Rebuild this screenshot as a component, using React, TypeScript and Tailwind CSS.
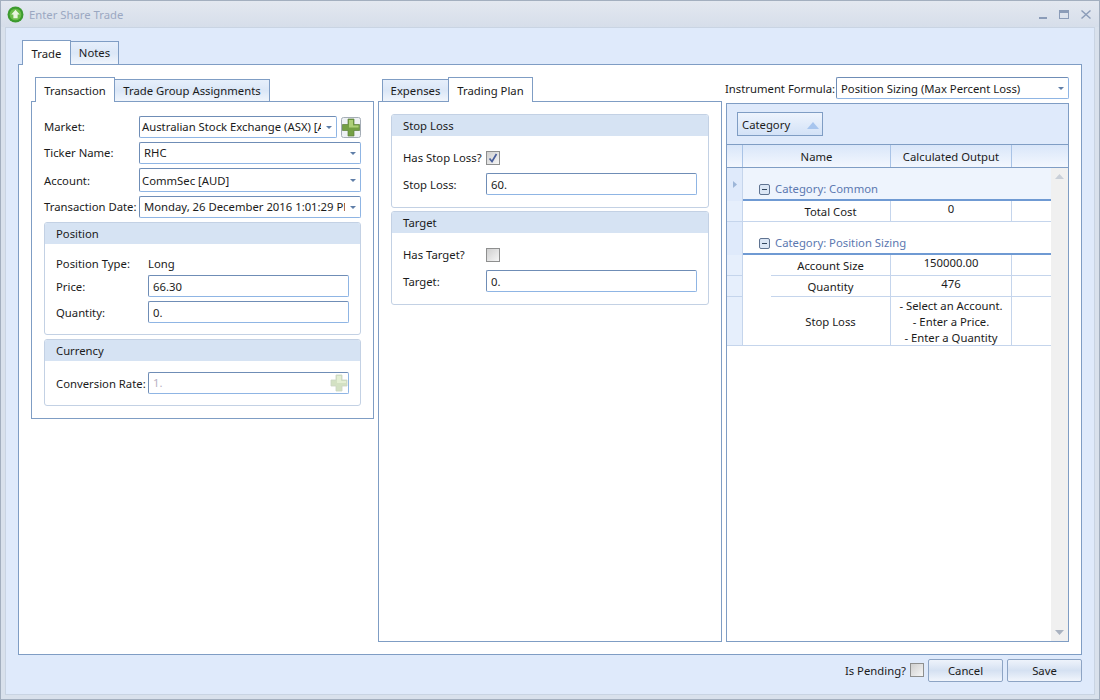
import React from 'react';

const inputBorder =
  'border border-[#6f8db6] border-r-[#8fb5e4] border-b-[#8fb5e4] rounded-[2px] bg-white';

function Arrow({ color = '#5f7ea8' }: { color?: string }) {
  return (
    <svg width="6" height="3" viewBox="0 0 6 3" className="shrink-0">
      <path d="M0 0h6L3 3z" fill={color} />
    </svg>
  );
}

function Combo({
  value,
  className,
  textClass,
}: {
  value: string;
  className: string;
  textClass: string;
}) {
  return (
    <div className={`flex min-w-0 items-center ${inputBorder} ${className}`}>
      <span className={`min-w-0 flex-1 overflow-hidden whitespace-nowrap ${textClass}`}>
        {value}
      </span>
      <span className="flex w-[15px] shrink-0 justify-center">
        <Arrow />
      </span>
    </div>
  );
}

function PlusIcon({ faded }: { faded?: boolean }) {
  return (
    <svg width="18" height="18" viewBox="0 0 18 18" className={faded ? 'opacity-30' : ''}>
      <path
        d="M6 1h6v5h5v6h-5v5H6v-5H1V6h5z"
        fill="#6f9e3c"
        stroke="#55793a"
        strokeWidth="0.8"
      />
      <path d="M7 2h4v5h5v2H7z" fill="#a9cc72" />
    </svg>
  );
}

function AddButton() {
  return (
    <svg width="20" height="21" viewBox="0 0 20 21" className="ml-[4px] shrink-0">
      <rect x="0.5" y="0.5" width="19" height="20" rx="2" fill="#eef1f4" stroke="#a4adb6" />
      <path d="M7 2h6v5.5h5.5v6H13V19H7v-5.5H1.5v-6H7z" fill="#74a044" stroke="#5c8039" strokeWidth="0.7" />
      <path d="M8 3h4v5.5h5.5v2H8z" fill="#adcf78" />
    </svg>
  );
}

function Group({
  title,
  className,
  children,
}: {
  title: string;
  className: string;
  children: React.ReactNode;
}) {
  return (
    <div className={`rounded-[3px] border border-[#c3d1e4] bg-white ${className}`}>
      <div className="flex h-[21px] items-center rounded-t-[2px] bg-[#d6e3f3] pl-[11px] pt-px">{title}</div>
      {children}
    </div>
  );
}

function Check({ checked }: { checked?: boolean }) {
  return (
    <div className="flex h-[14px] w-[14px] items-center justify-center border border-[#8e8f8f] bg-gradient-to-br from-[#cfcfcf] to-[#f6f6f6]">
      {checked && (
        <svg width="10" height="10" viewBox="0 0 10 10">
          <path d="M1.5 5.5 4 8.5 8.5 1" fill="none" stroke="#4a5f9c" strokeWidth="1.7" />
        </svg>
      )}
    </div>
  );
}

function Tab({
  label,
  active,
  className,
}: {
  label: string;
  active?: boolean;
  className: string;
}) {
  return (
    <div
      className={`flex items-center justify-center border border-b-0 border-[#7f9dc4] ${
        active
          ? 'z-10 -mb-px bg-white pt-[2px]'
          : 'bg-gradient-to-b from-[#e6effb] via-[#dbe7f7] to-[#f0f5fc] pt-px'
      } ${className}`}
    >
      {label}
    </div>
  );
}

function Field({ label, value, labelClass }: { label: string; value: string; labelClass: string }) {
  return (
    <div className="flex items-center">
      <span className={`pt-[2px] ${labelClass}`}>{label}</span>
      <div className={`flex h-[22px] flex-1 items-center pl-[4px] pt-[2px] ${inputBorder}`}>{value}</div>
    </div>
  );
}

const rows = [
  { name: 'Account Size', value: ['150000.00'], h: 'h-[21px]', last: false },
  { name: 'Quantity', value: ['476'], h: 'h-[21px]', last: false },
  {
    name: 'Stop Loss',
    value: ['- Select an Account.', '- Enter a Price.', '- Enter a Quantity'],
    h: 'h-[49px]',
    last: true,
  },
];

function GridRow({
  name,
  value,
  h,
  last,
}: {
  name: string;
  value: string[];
  h: string;
  last: boolean;
}) {
  const line = 'border-b border-[#c5d5ec]';
  return (
    <div className={`flex ${h}`}>
      <div className={`w-[16px] shrink-0 border-r border-[#c5d5ec] bg-[#e6effc] ${line}`} />
      <div className={`w-[28px] shrink-0 ${last ? line : ''}`} />
      <div className={`flex w-[120px] shrink-0 items-center justify-center border-r border-[#c5d5ec] pt-[2px] ${line}`}>
        {name}
      </div>
      <div
        className={`flex w-[121px] shrink-0 flex-col items-center justify-start border-r border-[#c5d5ec] leading-[16px] ${
          value.length > 1 ? 'pt-px' : ''
        } ${line}`}
      >
        {value.map((v) => (
          <span key={v}>{v}</span>
        ))}
      </div>
      <div className={`flex-1 ${line}`} />
    </div>
  );
}

function GroupRow({ title, current }: { title: string; current?: boolean }) {
  return (
    <div className="flex h-[33px]">
      <div className="flex w-[16px] shrink-0 items-center justify-center border-r border-[#c5d5ec] bg-[#dfeafb]">
        {current && (
          <svg width="4" height="7" viewBox="0 0 4 7">
            <path d="M0 0l4 3.5L0 7z" fill="#9db6d8" />
          </svg>
        )}
      </div>
      <div
        className={`flex flex-1 items-end gap-[5px] border-b-2 border-[#6f9ad3] pb-[1px] pl-[16px] text-[#5b78b0] ${
          current ? 'bg-[#eef4fd]' : 'bg-white'
        }`}
      >
        <div className="mb-[3px] flex h-[11px] w-[11px] items-center justify-center rounded-[2px] border border-[#5f7391] bg-[#dbe6f5]">
          <div className="h-px w-[5px] bg-[#33475f]" />
        </div>
        {title}
      </div>
    </div>
  );
}

export default function App() {
  return (
    <div
      className="flex h-[700px] w-[1100px] flex-col overflow-hidden border border-[#a3afbf] bg-[#d9e1ec] text-[11.3px] text-[#1b1b1b]"
      style={{ fontFamily: '"Noto Sans", sans-serif' }}
    >
      {/* title bar */}
      <div className="flex h-[26px] shrink-0 items-center bg-gradient-to-b from-[#e3e8f0] to-[#d6deea] pl-[6px] pr-[8px]">
        <svg width="17" height="17" viewBox="0 0 16 16">
          <circle cx="8" cy="8" r="7.5" fill="#3c9a2e" />
          <circle cx="8" cy="8" r="5.5" fill="#6cbd4a" />
          <path d="M8 3.5 12 8H10v3.5H6V8H4z" fill="#e9f5e0" />
        </svg>
        <span className="ml-[5px] flex-1 pt-[2px] text-[#9ba8c2]">Enter Share Trade</span>
        <div className="flex items-center gap-[12px]">
          <svg width="8" height="8" viewBox="0 0 8 8" className="mt-[1px]">
            <path d="M0 6h8v2H0z" fill="#8b9cb8" />
          </svg>
          <svg width="10" height="9" viewBox="0 0 10 9">
            <rect x="0.5" y="0.5" width="9" height="8" fill="none" stroke="#8b9cb8" />
            <path d="M0 0h10v3H0z" fill="#8b9cb8" />
          </svg>
          <svg width="10" height="9" viewBox="0 0 10 9">
            <path d="M0.5 0.5l9 8M9.5 0.5l-9 8" stroke="#8b9cb8" strokeWidth="1.4" />
          </svg>
        </div>
      </div>

      {/* window body */}
      <div className="mx-[4px] mb-[4px] flex min-h-0 flex-1 flex-col border border-[#c9d4e3] bg-[#dfeafb] pl-[12px] pr-[12px] pt-[12px]">
        <div className="flex h-[24px] shrink-0 items-end pl-[4px]">
          <Tab label="Trade" active className="h-[25px] w-[49px]" />
          <Tab label="Notes" className="h-[23px] w-[49px] -ml-px" />
        </div>

        <div className="flex min-h-0 flex-1 gap-[4px] border border-[#7f9dc4] bg-white pl-[12px] pt-[12px]">
          {/* left */}
          <div className="w-[343px] shrink-0">
            <div className="flex h-[24px] items-end pl-[4px]">
              <Tab label="Transaction" active className="h-[25px] w-[80px]" />
              <Tab label="Trade Group Assignments" className="h-[22px] w-[156px] -ml-px" />
            </div>
            <div className="h-[318px] border border-[#7f9dc4] px-[12px] pt-[14px]">
              <div className="flex flex-col">
                <div className="flex items-center">
                  <span className="w-[95px] shrink-0 whitespace-nowrap">Market:</span>
                  <Combo
                    value="Australian Stock Exchange (ASX) [AUD]"
                    className="h-[22px] w-[198px]"
                    textClass="pl-[2px]"
                  />
                  <AddButton />
                </div>
                <div className="mt-[4px] flex items-center">
                  <span className="w-[95px] shrink-0 whitespace-nowrap">Ticker Name:</span>
                  <Combo value="RHC" className="h-[22px] flex-1" textClass="pl-[4px]" />
                </div>
                <div className="mt-[4px] flex items-center">
                  <span className="w-[95px] shrink-0 whitespace-nowrap pt-[2px]">Account:</span>
                  <Combo value="CommSec [AUD]" className="h-[24px] flex-1" textClass="pl-[2px] pt-[2px]" />
                </div>
                <div className="mt-[4px] flex items-center">
                  <span className="w-[95px] shrink-0 whitespace-nowrap">Transaction Date:</span>
                  <Combo
                    value="Monday, 26 December 2016 1:01:29 PM"
                    className="h-[22px] flex-1"
                    textClass="pl-[4px]"
                  />
                </div>
              </div>

              <Group title="Position" className="mt-[4px] h-[113px]">
                <div className="flex flex-col gap-[4px] px-[11px] pt-[11px]">
                  <div className="-mb-[2px] flex h-[18px] items-center">
                    <span className="w-[92px] whitespace-nowrap">Position Type:</span>
                    <span>Long</span>
                  </div>
                  <Field label="Price:" value="66.30" labelClass="w-[92px]" />
                  <Field label="Quantity:" value="0." labelClass="w-[92px]" />
                </div>
              </Group>

              <Group title="Currency" className="mt-[4px] h-[67px]">
                <div className="flex items-center px-[11px] pt-[11px]">
                  <span className="w-[92px] whitespace-nowrap pt-[2px]">Conversion Rate:</span>
                  <div className={`flex h-[22px] flex-1 items-center justify-between pl-[4px] text-[#b9b2c4] ${inputBorder}`}>
                    1.
                    <PlusIcon faded />
                  </div>
                </div>
              </Group>
            </div>
          </div>

          {/* middle */}
          <div className="mb-[12px] flex w-[344px] shrink-0 flex-col">
            <div className="flex h-[24px] items-end pl-[4px]">
              <Tab label="Expenses" className="h-[22px] w-[67px]" />
              <Tab label="Trading Plan" active className="h-[25px] w-[85px] -ml-px" />
            </div>
            <div className="flex-1 border border-[#7f9dc4] px-[12px] pt-[12px]">
              <Group title="Stop Loss" className="h-[94px] w-[318px]">
                <div className="flex flex-col gap-[5px] px-[11px] pt-[12px]">
                  <div className="flex h-[20px] items-center">
                    <span className="w-[83px] whitespace-nowrap">Has Stop Loss?</span>
                    <Check checked />
                  </div>
                  <Field label="Stop Loss:" value="60." labelClass="w-[83px]" />
                </div>
              </Group>
              <Group title="Target" className="mt-[3px] h-[94px] w-[318px]">
                <div className="flex flex-col gap-[5px] px-[11px] pt-[12px]">
                  <div className="flex h-[20px] items-center">
                    <span className="w-[83px] whitespace-nowrap">Has Target?</span>
                    <Check />
                  </div>
                  <Field label="Target:" value="0." labelClass="w-[83px]" />
                </div>
              </Group>
            </div>
          </div>

          {/* right */}
          <div className="mb-[12px] flex w-[343px] shrink-0 flex-col">
            <div className="flex h-[22px] shrink-0 items-center">
              <span className="-ml-px w-[111px] shrink-0 whitespace-nowrap pt-[2px]">Instrument Formula:</span>
              <Combo
                value="Position Sizing (Max Percent Loss)"
                className="h-[22px] flex-1"
                textClass="pl-[4px] pt-[2px]"
              />
            </div>
            <div className="mt-[4px] flex min-h-0 flex-1 flex-col border border-[#7f9dc4]">
              <div className="flex h-[41px] shrink-0 items-center border-b border-[#7f9dc4] bg-[#dfeafb] pl-[10px]">
                <div className="flex h-[24px] w-[86px] items-center justify-between border border-[#7f9dc4] bg-gradient-to-b from-[#eef4fd] to-[#d3e2f7] pl-[4px] pr-[3px] pt-[2px]">
                  Category
                  <svg width="12" height="7" viewBox="0 0 12 7">
                    <path d="M0 7 6 0l6 7z" fill="#a7c5ee" />
                  </svg>
                </div>
              </div>
              <div className="flex h-[23px] shrink-0 items-center border-b border-[#7f9dc4] bg-gradient-to-b from-[#d9e6f9] to-[#f3f7fe]">
                <div className="h-full w-[16px] shrink-0 border-r border-[#a9c3e6]" />
                <div className="flex h-full w-[148px] shrink-0 items-center justify-center border-r border-[#a9c3e6] pt-[2px]">
                  Name
                </div>
                <div className="flex h-full w-[121px] shrink-0 items-center justify-center border-r border-[#a9c3e6] pt-[2px]">
                  Calculated Output
                </div>
              </div>
              <div className="flex min-h-0 flex-1 bg-white">
                <div className="min-w-0 flex-1">
                  <GroupRow title="Category: Common" current />
                  <GridRow name="Total Cost" value={['0']} h="h-[21px]" last />
                  <GroupRow title="Category: Position Sizing" />
                  {rows.map((r) => (
                    <GridRow key={r.name} {...r} />
                  ))}
                </div>
                <div className="flex w-[17px] shrink-0 flex-col items-center justify-between bg-[#f0f0f0] py-[6px]">
                  <svg width="9" height="5" viewBox="0 0 9 5">
                    <path d="M0 5 4.5 0 9 5z" fill="#c9cfd8" />
                  </svg>
                  <svg width="9" height="5" viewBox="0 0 9 5">
                    <path d="M0 0h9L4.5 5z" fill="#a9b2c0" />
                  </svg>
                </div>
              </div>
            </div>
          </div>
        </div>

        {/* footer */}
        <div className="flex h-[39px] shrink-0 items-start justify-end pt-[4px]">
          <span className="mt-[4px]">Is Pending?</span>
          <div className="ml-[4px] mt-[4px]">
            <Check />
          </div>
          <button className="ml-[4px] h-[23px] w-[75px] rounded-[2px] border border-[#8da4c4] bg-gradient-to-b from-[#eef3fb] via-[#d5e1f2] to-[#f1f5fc] pt-px">
            Cancel
          </button>
          <button className="ml-[4px] h-[23px] w-[75px] rounded-[2px] border border-[#8da4c4] bg-gradient-to-b from-[#eef3fb] via-[#d5e1f2] to-[#f1f5fc] pt-px">
            Save
          </button>
        </div>
      </div>
    </div>
  );
}
